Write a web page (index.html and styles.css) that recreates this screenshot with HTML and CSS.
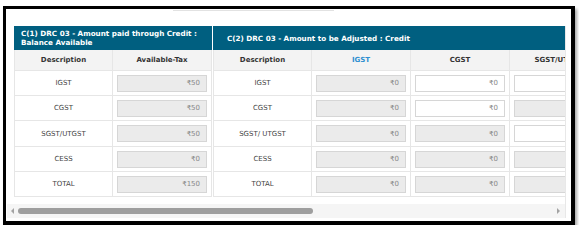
FILE: index.html
```html
<!DOCTYPE html>
<html>
<head>
<meta charset="utf-8">
<link rel="stylesheet" href="styles.css">
</head>
<body>
<div class="frame">
  <div class="topline"></div>
  <div class="scroller">
    <div class="tables">
      <div class="panel p1">
        <div class="title t1">C(1) DRC 03 - Amount paid through Credit :<br>Balance Available</div>
        <div class="th first">Description</div>
        <div class="th">Available-Tax</div>

        <div class="td first">IGST</div>
        <div class="td"><div class="inp ro">₹50</div></div>
        <div class="td first">CGST</div>
        <div class="td"><div class="inp ro">₹50</div></div>
        <div class="td first tall">SGST/UTGST</div>
        <div class="td tall"><div class="inp ro">₹50</div></div>
        <div class="td first">CESS</div>
        <div class="td"><div class="inp ro">₹0</div></div>
        <div class="td first">TOTAL</div>
        <div class="td"><div class="inp ro">₹150</div></div>
      </div>
      <div class="panel p2">
        <div class="title t2">C(2) DRC 03 - Amount to be Adjusted : Credit</div>
        <div class="th first">Description</div>
        <div class="th blue">IGST</div>
        <div class="th">CGST</div>
        <div class="th">SGST/UTGST</div>

        <div class="td first">IGST</div>
        <div class="td"><div class="inp ro">₹0</div></div>
        <div class="td"><div class="inp">₹0</div></div>
        <div class="td"><div class="inp">₹0</div></div>

        <div class="td first">CGST</div>
        <div class="td"><div class="inp ro">₹0</div></div>
        <div class="td"><div class="inp">₹0</div></div>
        <div class="td"><div class="inp ro">₹0</div></div>

        <div class="td first">SGST/ UTGST</div>
        <div class="td"><div class="inp ro">₹0</div></div>
        <div class="td"><div class="inp ro">₹0</div></div>
        <div class="td"><div class="inp">₹0</div></div>

        <div class="td first">CESS</div>
        <div class="td"><div class="inp ro">₹0</div></div>
        <div class="td"><div class="inp ro">₹0</div></div>
        <div class="td"><div class="inp ro">₹0</div></div>

        <div class="td first">TOTAL</div>
        <div class="td"><div class="inp ro">₹0</div></div>
        <div class="td"><div class="inp ro">₹0</div></div>
        <div class="td"><div class="inp ro">₹0</div></div>
      </div>
    </div>
    <div class="hscroll">
      <span class="arr left"></span>
      <span class="thumb"></span>
      <span class="spacer"></span>
      <span class="arr right"></span>
    </div>
  </div>
</div>
</body>
</html>
```

FILE: styles.css
```css
html, body {
  margin: 0;
  padding: 0;
  background: #ffffff;
}
body {
  font-family: "DejaVu Sans", Verdana, sans-serif;
  font-size: 7px;
  color: #444;
}
.frame {
  margin: 6px 0 0 3px;
  width: 565px;
  height: 212px;
  border-style: solid;
  border-color: #000;
  border-width: 3px 4px 4px 3px;
  background: #fff;
  box-shadow: 2px 3px 3px rgba(0, 0, 0, 0.35);
  overflow: hidden;
}
.topline {
  height: 1px;
  margin: 1px 0 0 167px;
  width: 161px;
  background: #e2e2e2;
}
.scroller {
  margin: 15px 0 0 1px;
  width: 558px;
  border-right: 1px solid #e8e8e8;
  overflow: hidden;
}
.tables {
  display: flex;
  gap: 1px;
  padding-left: 7px;
  width: max-content;
}
.panel {
  display: grid;
  grid-template-rows: 24px 21px 25px 25px 26px 25px 25px;
}
.p1 { grid-template-columns: 99px 99px; }
.p2 { grid-template-columns: 99px 99px 99px 99px; }
.title {
  grid-column: 1 / -1;
  background: #005f80;
  color: #fff;
  font-weight: bold;
  font-size: 7.2px;
  line-height: 9px;
  display: flex;
  align-items: center;
  padding-left: 7px;
}
.t2 { padding-left: 14px; }
.th, .td {
  box-sizing: border-box;
  border-right: 1px solid #e6e6e6;
  border-bottom: 1px solid #e6e6e6;
  display: flex;
  align-items: center;
  justify-content: center;
}
.th {
  background: #f3f3f3;
  font-weight: bold;
  color: #333;
}
.th.blue { color: #2f8fd0; }
.first { border-left: 1px solid #e6e6e6; }
.td { background: #fff; color: #444; }
.inp {
  box-sizing: border-box;
  width: 90px;
  height: 17px;
  border: 1px solid #d6d6d6;
  background: #fff;
  color: #888;
  display: flex;
  align-items: center;
  justify-content: flex-end;
  padding-right: 6px;
}
.inp.ro { background: #ebebeb; }
.hscroll {
  margin-top: 7px;
  height: 14px;
  background: #f5f5f5;
  display: flex;
  align-items: center;
}
.arr {
  width: 0;
  height: 0;
  border-top: 3px solid transparent;
  border-bottom: 3px solid transparent;
}
.arr.left {
  margin-left: 4px;
  border-right: 3px solid #a3a3a3;
}
.arr.right {
  margin-right: 5px;
  border-left: 3px solid #a3a3a3;
}
.thumb {
  margin-left: 4px;
  width: 295px;
  height: 6px;
  border-radius: 3px;
  background: #9e9e9e;
}
.spacer { flex: 1; }
```
